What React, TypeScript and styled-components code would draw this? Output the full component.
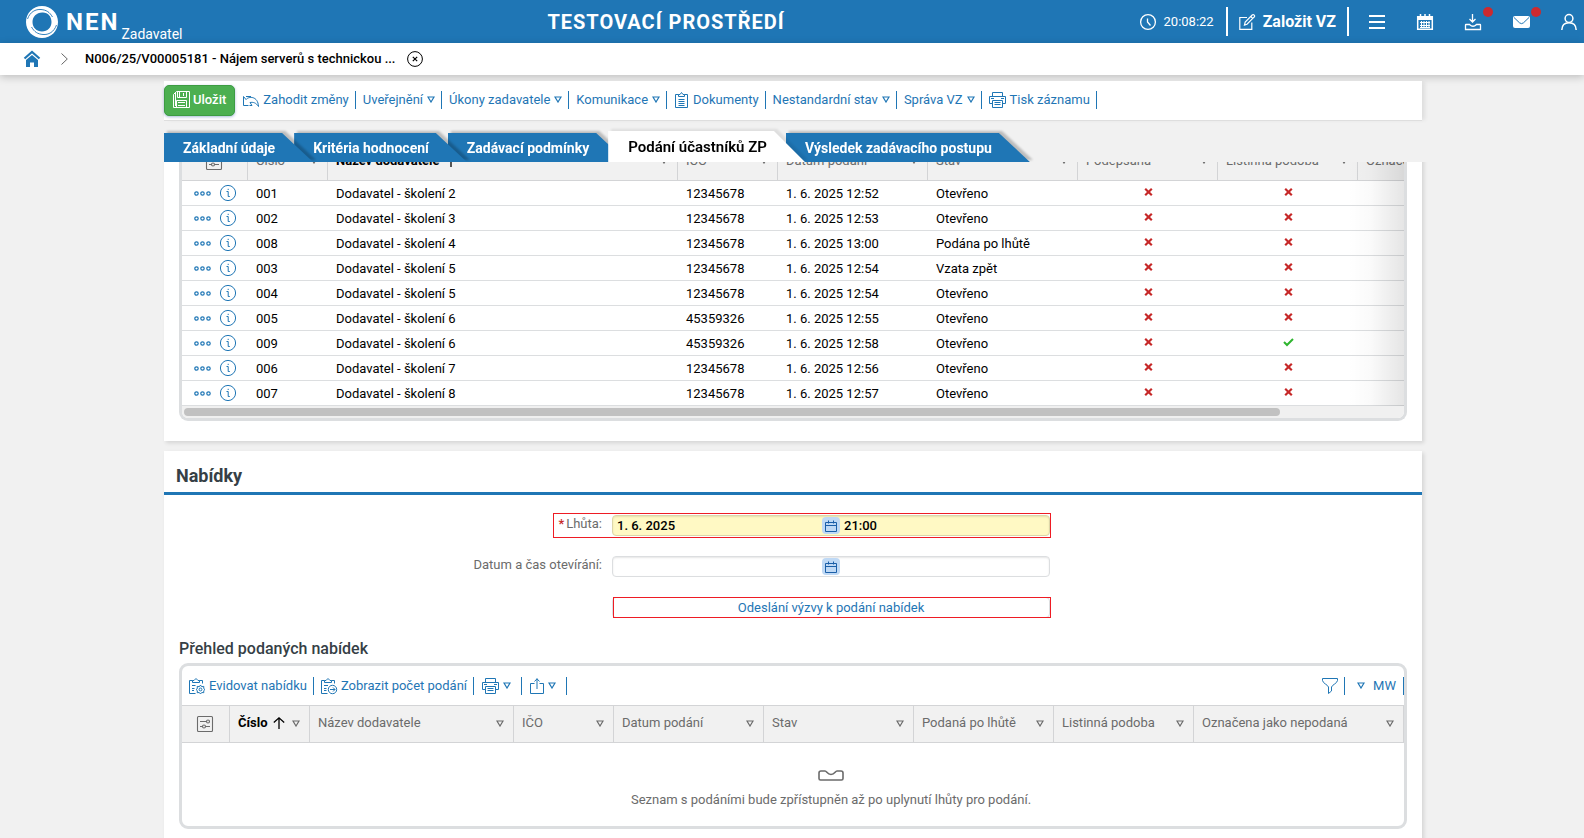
import React from "react";
import styled, { createGlobalStyle, css } from "styled-components";

const blue = "#1f76b5";
const line = "#dcdee0";
const grey = "#6b6b6b";

const GlobalStyle = createGlobalStyle`
  *, *::before, *::after { box-sizing: border-box; }
  body {
    margin: 0;
    background: #f1f1f1;
    color: #000;
    font: 13px/16px Roboto, "Open Sans", sans-serif;
  }
  button, input { font: inherit; color: inherit; }
  button { background: none; border: 0; padding: 0; cursor: pointer; }
  a { color: inherit; text-decoration: none; }
  h1, h2, h3, p { margin: 0; }
  svg { display: block; flex: none; }
`;

/* ---------- icons ---------- */

const Svg = styled.svg<{ $size?: number; $w?: number; $stroke?: number }>`
  width: ${(p) => p.$w ?? p.$size ?? 16}px;
  height: ${(p) => p.$size ?? 16}px;
  fill: none;
  stroke: currentColor;
  stroke-width: ${(p) => p.$stroke ?? 1};
  overflow: visible;
`;

const Logo = () => (
  <Svg viewBox="0 0 32 32" $size={32} aria-hidden="true">
    <path
      fill="#fff"
      stroke="none"
      fillRule="evenodd"
      d="M16 0C25 0 32 7 32 16S25 32 16 32 0 25 0 16 7 0 16 0ZM17 6.500C11 6 6.500 10.500 6.500 16 6.500 21.500 10.500 25.500 16 25.500S25.500 21.500 25.500 16 22 6.500 17 6.500Z"
    />
    <path
      stroke={blue}
      strokeWidth="0.900"
      d="M1.500 13C4 6 9.500 3 15 3.500S23.500 6 26.500 11M30.500 19C28 26 22.500 29 17 28.500S8.500 26 5.500 21"
    />
  </Svg>
);

const Triangle = styled(({ className }: { className?: string }) => (
  <svg className={className} viewBox="0 0 8 7" aria-hidden="true">
    <path d="M1 1H7L4 6Z" />
  </svg>
))`
  width: 8px;
  height: 7px;
  fill: none;
  stroke: currentColor;
  stroke-width: 1.2;
`;

const SaveIcon = () => (
  <Svg viewBox="0 0 17 17" $size={17}>
    <path d="M3.500 .5H16.500V16.500H.5V3.500ZM4.500 .5V6.500H13.500V.5M6.500 .5V6.500M10.500 2V5M3.500 16.500V9.500H13.500V16.500M5 11.500H12M5 14.500H12M2.500 2V15" />
  </Svg>
);
const UndoIcon = () => (
  <Svg viewBox="0 0 16 14" $w={16} $size={14}>
    <path d="M5.500 12.500H.5V3.500M.5 3.500L3 6.500M3 6.500C6 3 15 3 15.500 13.500C13 9.500 10 9 7 9.500L9 12.500H6.500M3 3.500H8" />
  </Svg>
);
const ClipboardIcon = () => (
  <Svg viewBox="0 0 15 16" $w={15}>
    <path d="M4.500 2.500H1.500V15.500H13.500V2.500H10.500M4.500 4.500V2.500H6L7.500 .5 9 2.500H10.500V4.500ZM4.500 7.500H10.500M4.500 9.500H10.500M4.500 11.500H10.500M4.500 13.500H10.500" />
  </Svg>
);
const PrintIcon = () => (
  <Svg viewBox="0 0 17 16" $w={17}>
    <path d="M3.500 4.500V.5H13.500V4.500M3.500 11.500H.5V4.500H16.500V11.500H13.500M2 6.500H5M3.500 8.500H13.500V15.500H3.500ZM5.500 10.500H11.500M5.500 12.500H11.500M12 6.500H15" />
  </Svg>
);
const ExportIcon = () => (
  <Svg viewBox="0 0 14 16" $w={14}>
    <path d="M4.500 5.500H.5V15.500H13.500V5.500H9.500M7 11V.5M4.500 3.500L7 .8 9.500 3.500" />
  </Svg>
);
const OfferGearIcon = () => (
  <Svg viewBox="0 0 16 16">
    <path d="M6.500 15.500H.5V2.500H3.500M10.500 2.500H13.500V5.500M3.500 4.500V2.500H5L7 .5 9 2.500H10.500V4.500ZM3 7.500H6.500M3 10.500H5.500M3 12.500H5" />
    <circle cx="11.500" cy="11.500" r="1.400" />
    <path d="M11.500 7L12.600 8.700 14.800 8.400 14.700 10.500 16 11.500 14.700 12.700 14.800 14.700 12.700 14.500 11.500 16 10.300 14.500 8.200 14.700 8.400 12.700 7 11.500 8.400 10.500 8.200 8.400 10.400 8.700Z" />
  </Svg>
);
const OfferArrowIcon = () => (
  <Svg viewBox="0 0 16 16">
    <path d="M6.500 15.500H.5V2.500H3.500M10.500 2.500H13.500V5.500M3.500 4.500V2.500H5L7 .5 9 2.500H10.500V4.500ZM3 7.500H7M3 10.500H5.500M3 12.500H5.500M9 11.500H14M12 9.500L14 11.500 12 13.500" />
    <circle cx="11.500" cy="11.500" r="4.200" />
  </Svg>
);
const FunnelIcon = () => (
  <Svg viewBox="0 0 16 16">
    <path d="M.5 1V2.500C1 5.500 5.500 6.500 6.500 9V15.500L9.500 13V9C10.500 6.500 15 5.500 15.500 2.500V.5H.5Z" />
  </Svg>
);
const SettingsIcon = () => (
  <Svg viewBox="0 0 16 16" $stroke={1.1}>
    <rect x=".5" y=".5" width="15" height="15" rx="1" />
    <path d="M3 5.500H9.500M3 10.500H5.500M8.500 10.500H13" />
    <circle cx="11" cy="5.500" r="1.500" />
    <circle cx="7" cy="10.500" r="1.500" />
  </Svg>
);
const ArrowUp = () => (
  <Svg viewBox="0 0 12 12" $size={12} $stroke={1.3}>
    <path d="M6 12V.8M.8 5.500L6 .8 11.200 5.500" />
  </Svg>
);
const DotsIcon = () => (
  <Svg viewBox="0 0 17 5" $w={17} $size={5} $stroke={1.2}>
    <circle cx="2.500" cy="2.500" r="1.700" />
    <circle cx="8.500" cy="2.500" r="1.700" />
    <circle cx="14.500" cy="2.500" r="1.700" />
  </Svg>
);
const InfoIcon = () => (
  <Svg viewBox="0 0 16 16">
    <circle cx="8" cy="8" r="7.600" />
    <path d="M6.500 6.500H8.200V11.500H9.800M8.200 3.800V5" />
  </Svg>
);
const CrossIcon = () => (
  <Svg viewBox="0 0 9 8" $w={9} $size={8}>
    <path d="M1.200 .8L7.800 7.200M7.800 .8L1.200 7.200" stroke="#c62828" strokeWidth="2.200" />
  </Svg>
);
const CheckIcon = () => (
  <Svg viewBox="0 0 11 8" $w={11} $size={8}>
    <path d="M1 4L4 7L10 1" stroke="#2fb52f" strokeWidth="2" />
  </Svg>
);
const DateIcon = () => (
  <Svg viewBox="0 0 12 12" $size={12}>
    <path d="M.5 2.500H11.500V11.500H.5ZM.5 5.500H11.500M3.500 .5V3.500M8.500 .5V3.500" />
  </Svg>
);
const EmptyIcon = () => (
  <Svg viewBox="0 0 26 11" $w={26} $size={11} $stroke={1.6}>
    <path d="M3 1H7C9 1 9 4.500 13 4.500S17 1 19 1H23Q25 1 25 3V8.500Q25 10 23.500 10H2.500Q1 10 1 8.500V3Q1 1 3 1Z" />
  </Svg>
);
const ClockIcon = () => (
  <Svg viewBox="0 0 16 16" $stroke={1.3}>
    <circle cx="8" cy="8" r="7.400" />
    <path d="M7.500 4.500V8L10.500 11.500" />
  </Svg>
);
const EditIcon = () => (
  <Svg viewBox="0 0 16 16" $stroke={1.2}>
    <path d="M8 3.500H.8V15.400H12.800V8.500M5.500 11L6.200 8 13.200 1Q14.200 .2 15.200 1.200T15 3.200L8 10.200ZM11.800 2.500L13.700 4.400" />
  </Svg>
);
const MenuIcon = () => (
  <Svg viewBox="0 0 16 14" $w={16} $size={14} $stroke={2}>
    <path d="M0 1H16M0 7H16M0 13H16" />
  </Svg>
);
const CalendarIcon = () => (
  <Svg viewBox="0 0 16 16">
    <path fill="#fff" stroke="none" d="M0 2H16V6H0Z" />
    <path d="M.7 2.700H15.300V15.300H.7Z" strokeWidth="1.500" />
    <path d="M3.500 0V3M12.500 0V3M8 0V3" strokeWidth="1.500" />
    <path d="M3 8.500H13M3 11.500H13M4.500 7V13.500M7 7V13.500M9.500 7V13.500M12 7V13.500M3 13.500H13" />
  </Svg>
);
const TrayIcon = () => (
  <Svg viewBox="0 0 16 16" $stroke={1.3}>
    <path d="M7.500 0V7.500M4.500 5L7.500 8 10.500 5M1 10.500H4.500Q8 14 11.500 10.500H15Q15.500 10.500 15.500 11V15.500H.5V11Q.5 10.500 1 10.500Z" />
  </Svg>
);
const MailIcon = () => (
  <Svg viewBox="0 0 17 12" $w={17} $size={12}>
    <rect width="17" height="12" rx="2" fill="#fff" stroke="none" />
    <path d="M1 1.500L6.500 6.800Q8.500 8.500 10.500 6.800L16 1.500" stroke={blue} />
  </Svg>
);
const UserIcon = () => (
  <Svg viewBox="0 0 16 16" $stroke={1.5}>
    <circle cx="8" cy="4.500" r="3.900" />
    <path d="M.8 16Q1 8.800 8 8.800T15.200 16" />
  </Svg>
);
const HomeIcon = () => (
  <Svg viewBox="0 0 16 16">
    <path d="M.5 7.500L8 1 15.500 7.500" stroke={blue} strokeWidth="2.200" />
    <path fill={blue} stroke="none" d="M2 9L8 4 14 9V16H10V11.500H6V16H2Z" />
  </Svg>
);
const ChevronIcon = () => (
  <Svg viewBox="0 0 7 12" $w={7} $size={12}>
    <path d="M.5 .5L6.300 6 .5 11.500" stroke="#666" />
  </Svg>
);
const CloseIcon = () => (
  <Svg viewBox="0 0 16 16">
    <circle cx="8" cy="8" r="7.400" />
    <path d="M5.800 5.800L10.200 10.200M10.200 5.800L5.800 10.200" strokeWidth="1.200" />
  </Svg>
);

/* ---------- page frame ---------- */

const Page = styled.div`
  height: 100vh;
  display: flex;
  flex-direction: column;
  overflow: hidden;
`;

const TopBar = styled.header`
  display: flex;
  align-items: center;
  justify-content: space-between;
  flex: none;
  height: 43px;
  padding: 0 7px 0 26px;
  background: ${blue};
  color: #fff;
`;

const Brand = styled.a`
  display: flex;
  align-items: center;
`;

const BrandName = styled.span`
  margin-left: 8px;
  font-size: 24px;
  line-height: 40px;
  font-weight: 700;
  letter-spacing: 2px;
`;

const BrandRole = styled.span`
  align-self: flex-end;
  margin-left: 2px;
  font-size: 14px;
  line-height: 16px;
`;

const EnvTitle = styled.h1`
  padding-left: 10px;
  font-size: 20px;
  line-height: 24px;
  font-weight: 700;
  letter-spacing: 1px;
`;

const TopTools = styled.div`
  display: flex;
  align-items: center;
`;

const Clock = styled.div`
  display: flex;
  align-items: center;
  gap: 8px;
  padding-right: 12px;
`;

const NewTender = styled.button`
  display: flex;
  align-items: center;
  gap: 8px;
  height: 29px;
  padding: 0 11px;
  margin-right: 20px;
  border: solid #fff;
  border-width: 0 2px;
  font-size: 16px;
  line-height: 20px;
  font-weight: 700;
`;

const IconRow = styled.nav`
  display: flex;
  align-items: center;
  gap: 32px;
`;

const IconButton = styled.button`
  position: relative;
  display: flex;
  align-items: center;
  justify-content: center;
  width: 16px;
  height: 16px;
`;

const Dot = styled.span`
  position: absolute;
  top: -7px;
  right: -12px;
  width: 10px;
  height: 10px;
  border-radius: 50%;
  background: #cc2a2f;
`;

const Crumbs = styled.nav`
  display: flex;
  align-items: center;
  flex: none;
  height: 32px;
  padding: 0 24px;
  background: #fff;
  font-weight: 500;
  box-shadow: 0 2px 8px rgba(0, 0, 0, 0.22);

  a + svg { margin: 0 17px 0 21px; }
  button { margin-left: 12px; }
`;

const Stage = styled.div`
  position: relative;
  flex: none;
  padding: 6px 162px 0 164px;
`;

const Tools = styled.div<{ $end?: boolean }>`
  display: flex;
  align-items: center;
  margin-left: ${(p) => (p.$end ? "auto" : 0)};
`;

const MainBar = styled.div`
  display: flex;
  align-items: center;
  height: 40px;
  background: #fff;
  border-bottom: 1px solid #dedede;
  box-shadow: 4px 0 4px -1px rgba(0, 0, 0, 0.08);

  ${Tools} { padding: 0 0 2px 1px; }
`;

const SaveButton = styled.button`
  display: flex;
  align-items: center;
  gap: 3px;
  height: 31px;
  padding: 0 8px 2px;
  border: 1px solid #3d9c42;
  border-radius: 5px;
  background: #4caf50;
  box-shadow: 0 1px 3px rgba(0, 60, 140, 0.35);
  color: #fff;
  font-weight: 500;
`;

const toolPadding = { normal: "0 6px 0 7px", wide: "0 10px 0 8px", view: "0 7px 0 12px" };

const Tool = styled.button<{ $pad?: keyof typeof toolPadding }>`
  display: flex;
  align-items: center;
  gap: ${(p) => (p.$pad === "view" ? 8 : 4)}px;
  height: 18px;
  padding: ${(p) => toolPadding[p.$pad ?? "normal"]};
  border-right: 1px solid ${blue};
  color: ${blue};
  white-space: nowrap;
`;

const TabStrip = styled.div`
  display: flex;
  align-items: flex-end;
  height: 41px;
`;

const slope = css`
  clip-path: polygon(0 0, calc(100% - 31px) 0, 100% 100%, 0 100%);
`;

const TabButton = styled.button<{ $active?: boolean; $level: number }>`
  position: relative;
  z-index: ${(p) => p.$level};
  height: ${(p) => (p.$active ? 31 : 29)}px;
  margin-right: -19px;
  padding: ${(p) => (p.$active ? "0 38px 0 20px" : "1px 38px 0 19px")};
  color: ${(p) => (p.$active ? "#000" : "#fff")};
  font-size: ${(p) => (p.$active ? 15 : 14)}px;
  font-weight: ${(p) => (p.$active ? 600 : 700)};
  filter: drop-shadow(3px -2px 1px rgba(0, 0, 0, ${(p) => (p.$active ? 0.08 : 0.22)}));
  white-space: nowrap;

  &::before {
    content: "";
    position: absolute;
    inset: 0;
    z-index: -1;
    background: ${(p) => (p.$active ? "#fff" : blue)};
    ${slope}
  }
`;

const ScrollArea = styled.main`
  flex: 1;
  min-height: 0;
  overflow: hidden;
  padding: 0 162px 0 164px;
`;

const ScrollContent = styled.div`
  display: flex;
  flex-direction: column;
  gap: 10px;
  margin-top: -19px;
`;

const Card = styled.section`
  padding-bottom: 20px;
  background: #fff;
  box-shadow: 2px 2px 4px rgba(0, 0, 0, 0.12);
`;

const CardTitle = styled.h2`
  height: 44px;
  padding: 13px 12px 0;
  border-bottom: 3px solid ${blue};
  color: #363f46;
  font-size: 18px;
  line-height: 24px;
  font-weight: 700;
`;

const SubTitle = styled.h3`
  margin: 21px 15px 4px;
  color: #363f46;
  font-size: 16px;
  line-height: 20px;
  font-weight: 500;
`;

/* ---------- grids ---------- */

const Frame = styled.div<{ $cut?: boolean }>`
  position: relative;
  margin: 0 15px;
  border: 3px solid ${line};
  border-top-width: ${(p) => (p.$cut ? 0 : 3)}px;
  border-radius: ${(p) => (p.$cut ? "0 0 9px 9px" : "9px")};
  overflow: hidden;
`;

const Grid = styled.table<{ $min?: number }>`
  width: 100%;
  min-width: ${(p) => p.$min ?? 0}px;
  table-layout: fixed;
  border-collapse: separate;
  border-spacing: 0;
`;

const Th = styled.th<{ $sorted?: boolean; $top?: boolean }>`
  height: 38px;
  padding: 0 9px 2px 8px;
  background: #f1f1f1;
  border: solid #d3d4d6;
  border-width: ${(p) => (p.$top ? 1 : 0)}px 1px 1px 0;
  color: ${(p) => (p.$sorted ? "#000" : grey)};
  font-weight: ${(p) => (p.$sorted ? 700 : 400)};
  text-align: left;
  white-space: nowrap;
`;

const HeadInner = styled.div`
  display: flex;
  align-items: center;
  gap: 5px;

  button:last-child { margin-left: auto; color: ${grey}; }
`;

const SetupButton = styled.button`
  display: block;
  margin: 2px auto 0;
  color: ${grey};
`;

const Td = styled.td<{ $center?: boolean }>`
  height: 25px;
  padding: 1px 8px 0;
  border-bottom: 1px solid ${line};
  text-align: ${(p) => (p.$center ? "center" : "left")};
  white-space: nowrap;

  > svg { display: inline-block; vertical-align: 2px; }
`;

const RowActions = styled.div`
  display: flex;
  align-items: center;
  gap: 9px;
  padding: 0 0 1px 4px;
  color: ${blue};
`;

const EdgeFade = styled.div`
  position: absolute;
  inset: 0 0 12px auto;
  width: 56px;
  background: linear-gradient(to right, rgba(0, 0, 0, 0), rgba(0, 0, 0, 0.02) 40%, rgba(0, 0, 0, 0.1));
`;

const ScrollTrack = styled.div`
  height: 12px;
  padding: 2px;
  background: #f0f0f0;
`;

const ScrollThumb = styled.div`
  width: 90%;
  height: 8px;
  border-radius: 4px;
  background: #c1c1c1;
`;

const FrameBar = styled.div`
  display: flex;
  align-items: center;
  height: 39px;
`;

const Empty = styled.div`
  display: flex;
  flex-direction: column;
  align-items: center;
  gap: 11px;
  height: 83px;
  padding: 27px 0 0 76px;
  color: ${grey};
`;

/* ---------- form ---------- */

const Form = styled.form`
  display: grid;
  grid-template-columns: 448fr 438fr 372fr;
  row-gap: 20px;
  padding-top: 20px;
`;

const Label = styled.label`
  grid-column: 1;
  padding-right: 10px;
  color: ${grey};
  line-height: 18px;
  text-align: right;

  b { margin-right: 2px; color: #c62828; font-weight: 500; }
`;

const Field = styled.div`
  position: relative;
  grid-column: 2;
`;

const DateBox = styled.div<{ $filled?: boolean }>`
  display: flex;
  align-items: center;
  height: 21px;
  border: 1px solid ${(p) => (p.$filled ? "#dcd6a8" : line)};
  border-radius: 4px;
  background: ${(p) => (p.$filled ? "#fff9c4" : "#fff")};
  box-shadow: inset 0 1px 2px rgba(0, 0, 0, 0.1);
`;

const DateInput = styled.input`
  flex: 1 1 0;
  min-width: 0;
  height: 19px;
  padding: 0 4px;
  border: 0;
  outline: 0;
  background: transparent;
  font-weight: 500;
`;

const DateButton = styled.button`
  display: flex;
  align-items: center;
  justify-content: center;
  width: 18px;
  height: 17px;
  border-radius: 4px;
  background: #bfd9f5;
  color: #1b5fa8;
`;

const Mark = styled.span<{ $wide?: boolean }>`
  position: absolute;
  inset: ${(p) => (p.$wide ? "-2px -1px -2px -59px" : "0 -1px 0 1px")};
  border: 1px solid #ee1c24;
  pointer-events: none;
`;

const SendButton = styled.button`
  width: 100%;
  height: 21px;
  border: 1px solid ${line};
  border-radius: 4px;
  color: ${blue};
`;

/* ---------- data ---------- */

type Head = { label: string; width?: number; sorted?: boolean };

const submissionHeads: Head[] = [
  { label: "Číslo", width: 80 },
  { label: "Název dodavatele", sorted: true },
  { label: "IČO", width: 100 },
  { label: "Datum podání", width: 150 },
  { label: "Stav", width: 150 },
  { label: "Podepsána", width: 140 },
  { label: "Listinná podoba", width: 140 },
  { label: "Označena jako nepodaná", width: 210 },
];

const offerHeads: Head[] = [
  { label: "Číslo", width: 80, sorted: true },
  { label: "Název dodavatele" },
  { label: "IČO", width: 100 },
  { label: "Datum podání", width: 150 },
  { label: "Stav", width: 150 },
  { label: "Podaná po lhůtě", width: 140 },
  { label: "Listinná podoba", width: 140 },
  { label: "Označena jako nepodaná", width: 210 },
];

const rows: [string, string, string, string, string, boolean][] = [
  ["001", "Dodavatel - školení 2", "12345678", "1. 6. 2025 12:52", "Otevřeno", false],
  ["002", "Dodavatel - školení 3", "12345678", "1. 6. 2025 12:53", "Otevřeno", false],
  ["008", "Dodavatel - školení 4", "12345678", "1. 6. 2025 13:00", "Podána po lhůtě", false],
  ["003", "Dodavatel - školení 5", "12345678", "1. 6. 2025 12:54", "Vzata zpět", false],
  ["004", "Dodavatel - školení 5", "12345678", "1. 6. 2025 12:54", "Otevřeno", false],
  ["005", "Dodavatel - školení 6", "45359326", "1. 6. 2025 12:55", "Otevřeno", false],
  ["009", "Dodavatel - školení 6", "45359326", "1. 6. 2025 12:58", "Otevřeno", true],
  ["006", "Dodavatel - školení 7", "12345678", "1. 6. 2025 12:56", "Otevřeno", false],
  ["007", "Dodavatel - školení 8", "12345678", "1. 6. 2025 12:57", "Otevřeno", false],
];

const tabs = [
  "Základní údaje",
  "Kritéria hodnocení",
  "Zadávací podmínky",
  "Podání účastníků ZP",
  "Výsledek zadávacího postupu",
];
const activeTab = 3;

const GridHead = ({ heads, first, top }: { heads: Head[]; first: number; top?: boolean }) => (
  <>
    <colgroup>
      <col width={first} />
      {heads.map((h) => (
        <col key={h.label} width={h.width} />
      ))}
    </colgroup>
    <thead>
      <tr>
        <Th $top={top}>
          <SetupButton aria-label="Nastavení sloupců">
            <SettingsIcon />
          </SetupButton>
        </Th>
        {heads.map((h) => (
          <Th key={h.label} $sorted={h.sorted} $top={top}>
            <HeadInner>
              {h.label}
              {h.sorted && <ArrowUp />}
              <button aria-label={`Filtr ${h.label}`}>
                <Triangle />
              </button>
            </HeadInner>
          </Th>
        ))}
      </tr>
    </thead>
  </>
);

export default function App() {
  return (
    <Page>
      <GlobalStyle />
      <TopBar>
        <Brand href="#">
          <Logo />
          <BrandName>NEN</BrandName>
          <BrandRole>Zadavatel</BrandRole>
        </Brand>
        <EnvTitle>TESTOVACÍ PROSTŘEDÍ</EnvTitle>
        <TopTools>
          <Clock>
            <ClockIcon />
            20:08:22
          </Clock>
          <NewTender>
            <EditIcon />
            Založit VZ
          </NewTender>
          <IconRow>
            <IconButton aria-label="Menu"><MenuIcon /></IconButton>
            <IconButton aria-label="Kalendář"><CalendarIcon /></IconButton>
            <IconButton aria-label="Stažené soubory"><TrayIcon /><Dot /></IconButton>
            <IconButton aria-label="Zprávy"><MailIcon /><Dot /></IconButton>
            <IconButton aria-label="Uživatel"><UserIcon /></IconButton>
          </IconRow>
        </TopTools>
      </TopBar>

      <Crumbs>
        <a href="#" aria-label="Domů"><HomeIcon /></a>
        <ChevronIcon />
        <span>N006/25/V00005181 - Nájem serverů s technickou ...</span>
        <button aria-label="Zavřít"><CloseIcon /></button>
      </Crumbs>

      <Stage>
        <MainBar>
          <SaveButton><SaveIcon />Uložit</SaveButton>
          <Tools>
            <Tool><UndoIcon />Zahodit změny</Tool>
            <Tool>Uveřejnění<Triangle /></Tool>
            <Tool>Úkony zadavatele<Triangle /></Tool>
            <Tool>Komunikace<Triangle /></Tool>
            <Tool><ClipboardIcon />Dokumenty</Tool>
            <Tool>Nestandardní stav<Triangle /></Tool>
            <Tool>Správa VZ<Triangle /></Tool>
            <Tool><PrintIcon />Tisk záznamu</Tool>
          </Tools>
        </MainBar>
        <TabStrip role="tablist">
          {tabs.map((t, i) => (
            <TabButton
              key={t}
              role="tab"
              aria-selected={i === activeTab}
              $active={i === activeTab}
              $level={i === activeTab ? 10 : tabs.length - i}
            >
              {t}
            </TabButton>
          ))}
        </TabStrip>
      </Stage>

      <ScrollArea>
        <ScrollContent>
          <Card>
            <Frame $cut>
              <Grid $min={1386}>
                <GridHead heads={submissionHeads} first={66} />
                <tbody>
                  {rows.map(([no, name, ico, date, state, paper]) => (
                    <tr key={no}>
                      <Td>
                        <RowActions>
                          <button aria-label={`Akce ${no}`}><DotsIcon /></button>
                          <button aria-label={`Detail ${no}`}><InfoIcon /></button>
                        </RowActions>
                      </Td>
                      <Td>{no}</Td>
                      <Td>{name}</Td>
                      <Td>{ico}</Td>
                      <Td>{date}</Td>
                      <Td>{state}</Td>
                      <Td $center><CrossIcon /></Td>
                      <Td $center>{paper ? <CheckIcon /> : <CrossIcon />}</Td>
                      <Td />
                    </tr>
                  ))}
                </tbody>
              </Grid>
              <EdgeFade />
              <ScrollTrack><ScrollThumb /></ScrollTrack>
            </Frame>
          </Card>

          <Card>
            <CardTitle>Nabídky</CardTitle>
            <Form onSubmit={(e) => e.preventDefault()}>
              <Label htmlFor="deadline"><b>*</b>Lhůta:</Label>
              <Field>
                <DateBox $filled>
                  <DateInput id="deadline" defaultValue="1. 6. 2025" />
                  <DateButton type="button" aria-label="Vybrat datum lhůty"><DateIcon /></DateButton>
                  <DateInput aria-label="Čas lhůty" defaultValue="21:00" />
                </DateBox>
                <Mark $wide />
              </Field>
              <Label htmlFor="opening">Datum a čas otevírání:</Label>
              <Field>
                <DateBox>
                  <DateInput id="opening" />
                  <DateButton type="button" aria-label="Vybrat datum otevírání"><DateIcon /></DateButton>
                  <DateInput aria-label="Čas otevírání" />
                </DateBox>
              </Field>
              <Field>
                <SendButton type="button">Odeslání výzvy k podání nabídek</SendButton>
                <Mark />
              </Field>
            </Form>

            <SubTitle>Přehled podaných nabídek</SubTitle>
            <Frame>
              <FrameBar>
                <Tools>
                  <Tool><OfferGearIcon />Evidovat nabídku</Tool>
                  <Tool><OfferArrowIcon />Zobrazit počet podání</Tool>
                  <Tool $pad="wide" aria-label="Tisk"><PrintIcon /><Triangle /></Tool>
                  <Tool $pad="wide" aria-label="Export"><ExportIcon /><Triangle /></Tool>
                </Tools>
                <Tools $end>
                  <Tool aria-label="Filtr"><FunnelIcon /></Tool>
                  <Tool $pad="view"><Triangle />MW</Tool>
                </Tools>
              </FrameBar>
              <Grid>
                <GridHead heads={offerHeads} first={48} top />
              </Grid>
              <Empty>
                <EmptyIcon />
                <p>Seznam s podáními bude zpřístupněn až po uplynutí lhůty pro podání.</p>
              </Empty>
            </Frame>
          </Card>
        </ScrollContent>
      </ScrollArea>
    </Page>
  );
}
